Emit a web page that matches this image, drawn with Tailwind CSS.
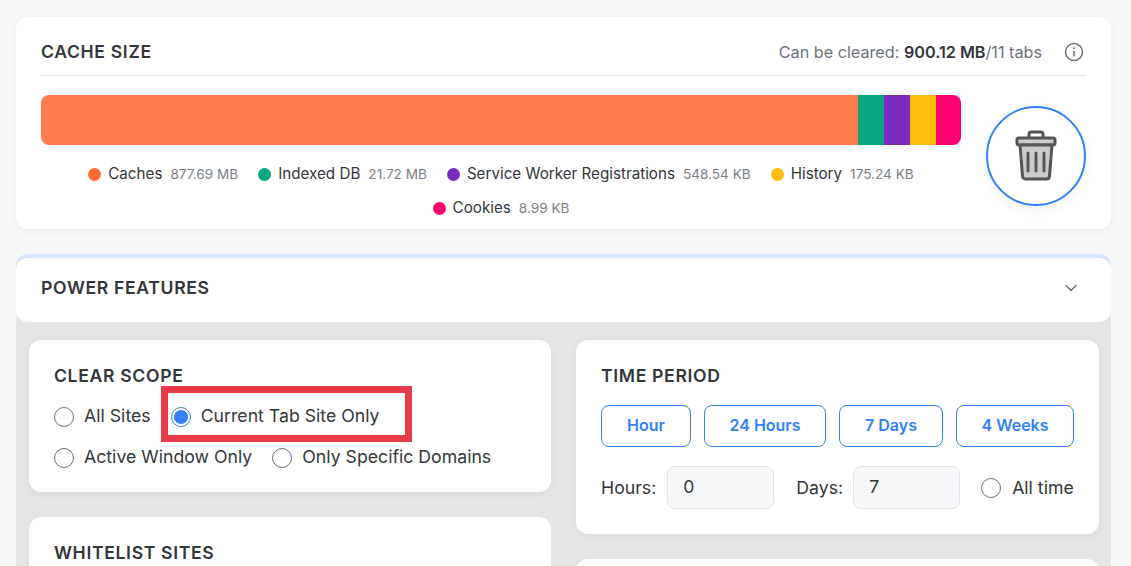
<!doctype html>
<html>
<head>
<meta charset="utf-8">
<script src="https://cdn.jsdelivr.net/npm/@tailwindcss/browser@4"></script>
</head>
<body class="m-0 h-[566px] overflow-hidden bg-[#f6f8fa] font-['Inter',sans-serif] text-[#33363b]">
<div class="flex flex-col pl-4 pr-5 pt-[17px]">
  <section class="h-[212px] rounded-xl bg-white px-[25px] shadow-[0_2px_8px_rgba(0,0,0,0.05)]">
    <div class="flex h-[59px] items-center justify-between border-b border-[#e2e3e5] pt-[12px]">
      <h2 class="text-[17.6px] font-semibold tracking-[0.66px]">CACHE SIZE</h2>
      <div class="flex items-center text-[16.2px] text-[#6c727c]">
        <span>Can be cleared: <b class="font-semibold text-[#33363b]">900.12 MB</b>/11 tabs</span>
        <svg class="ml-[22px] mr-[2px] h-5 w-5" viewBox="0 0 20 20" fill="none" stroke="#6c727c" stroke-width="1.5" stroke-linecap="round"><circle cx="10" cy="10" r="8.5"/><path d="M10 9.5v4.5"/><path d="M10 6.2v.1" stroke-width="2"/></svg>
      </div>
    </div>
    <div class="flex">
      <div class="w-[920px] pt-[19px]">
        <div class="flex h-[50px] overflow-hidden rounded-lg">
          <div class="w-[817px] bg-[#ff7c4f]"></div>
          <div class="w-[26px] bg-[#06a77d]"></div>
          <div class="w-[26px] bg-[#7b2cbf]"></div>
          <div class="w-[26px] bg-[#ffbc0a]"></div>
          <div class="w-[25px] bg-[#ff006e]"></div>
        </div>
        <div class="mt-[18px] flex flex-wrap justify-center gap-x-[20px] gap-y-[12px] text-[15.2px] leading-[22px]">
          <div class="flex items-center"><span class="mr-[7px] h-[13px] w-[13px] rounded-full bg-[#ff6b35]"></span>Caches<span class="ml-2 text-[13.6px] text-[#7a7f87]">877.69 MB</span></div>
          <div class="flex items-center"><span class="mr-[7px] h-[13px] w-[13px] rounded-full bg-[#06a77d]"></span>Indexed DB<span class="ml-2 text-[13.6px] text-[#7a7f87]">21.72 MB</span></div>
          <div class="flex items-center"><span class="mr-[7px] h-[13px] w-[13px] rounded-full bg-[#7b2cbf]"></span>Service Worker Registrations<span class="ml-2 text-[13.6px] text-[#7a7f87]">548.54 KB</span></div>
          <div class="flex items-center"><span class="mr-[7px] h-[13px] w-[13px] rounded-full bg-[#ffbc0a]"></span>History<span class="ml-2 text-[13.6px] text-[#7a7f87]">175.24 KB</span></div>
          <div class="flex items-center"><span class="mr-[7px] h-[13px] w-[13px] rounded-full bg-[#ff006e]"></span>Cookies<span class="ml-2 text-[13.6px] text-[#7a7f87]">8.99 KB</span></div>
        </div>
      </div>
      <div class="ml-[25px] mt-[30px] flex h-[100px] w-[100px] items-center justify-center rounded-full border-2 border-[#3281f6] bg-white shadow-[0_4px_12px_rgba(0,0,0,0.06)]">
        <svg class="h-[52px] w-[42px]" viewBox="0 0 42 52" fill="none" stroke="#555" stroke-width="3" stroke-linejoin="round" stroke-linecap="round">
          <path d="M14 7V4.5Q14 2 16.5 2h9Q28 2 28 4.5V7"/>
          <rect x="2" y="8" width="38" height="7" rx="2" fill="#ccc"/>
          <path d="M5 15l2.5 31q.3 3 3 3h21q2.7 0 3-3L37 15z" fill="#ccc"/>
          <path d="M13 23v18M21 23v18M29 23v18"/>
        </svg>
      </div>
    </div>
  </section>

  <section class="mt-[25px] rounded-t-xl border-t-4 border-[#d5e6ff] bg-[#e5e5e5]">
    <div class="flex h-16 items-center justify-between rounded-xl bg-white pb-[4px] pl-[25px] pr-[32px]">
      <h2 class="text-[17.6px] font-semibold tracking-[0.66px]">POWER FEATURES</h2>
      <svg class="h-4 w-4" viewBox="0 0 16 16" fill="none" stroke="#6c727c" stroke-width="1.5" stroke-linecap="round" stroke-linejoin="round"><path d="M3 5.5l5 5 5-5"/></svg>
    </div>
    <div class="grid grid-cols-[522px_523px] gap-x-[25px] px-[13px] pt-[18px]">
      <div class="flex flex-col gap-[25px]">
        <div class="h-[152px] rounded-xl bg-white px-[25px] pt-[25px] shadow-[0_2px_8px_rgba(0,0,0,0.05)]">
          <h3 class="text-[17.6px] leading-[22px] font-semibold tracking-[0.66px]">CLEAR SCOPE</h3>
          <div class="mt-[17px] flex h-[25px] items-center text-[17.7px]">
            <span class="mr-[10px] h-5 w-5 rounded-full border border-[#6f6f6f] bg-white"></span><span>All Sites</span>
            <span class="relative ml-[20px] mr-[10px] flex h-5 w-5 items-center justify-center rounded-full border border-[#3281f6] bg-white"><span class="h-[14px] w-[14px] rounded-full bg-[#3281f6]"></span><span class="absolute left-[-11px] top-[-22px] h-[56px] w-[251px] border-[7px] border-[#e83a47]"></span></span><span>Current Tab Site Only</span>
          </div>
          <div class="mt-[16px] flex h-[25px] items-center text-[17.7px]">
            <span class="mr-[10px] h-5 w-5 rounded-full border border-[#6f6f6f] bg-white"></span><span>Active Window Only</span>
            <span class="ml-[20px] mr-[10px] h-5 w-5 rounded-full border border-[#6f6f6f] bg-white"></span><span>Only Specific Domains</span>
          </div>
        </div>
        <div class="h-[120px] rounded-xl bg-white px-[25px] pt-[25px]">
          <h3 class="text-[17.6px] leading-[22px] font-semibold tracking-[0.66px]">WHITELIST SITES</h3>
        </div>
      </div>
      <div class="flex flex-col gap-[25px]">
        <div class="h-[194px] rounded-xl bg-white px-[25px] pt-[25px] shadow-[0_2px_8px_rgba(0,0,0,0.05)]">
          <h3 class="text-[17.6px] leading-[22px] font-semibold tracking-[0.66px]">TIME PERIOD</h3>
          <div class="mt-[18px] flex gap-[13px] text-[16px] font-semibold text-[#3281f6]">
            <button class="h-[42px] w-[90px] rounded-lg border border-[#3281f6] pb-[2px]">Hour</button>
            <button class="h-[42px] w-[122px] rounded-lg border border-[#3281f6] pb-[2px]">24 Hours</button>
            <button class="h-[42px] w-[104px] rounded-lg border border-[#3281f6] pb-[2px]">7 Days</button>
            <button class="h-[42px] w-[118px] rounded-lg border border-[#3281f6] pb-[2px]">4 Weeks</button>
          </div>
          <div class="mt-[19px] flex items-center text-[17.7px]">
            <span class="mr-[11px] pt-[2px]">Hours:</span>
            <input class="h-[43px] w-[107px] rounded-lg border border-[#dfe3ea] bg-[#f6f8fa] pl-[15px] pb-[3px] text-[17.6px]" value="0">
            <span class="ml-[22px] mr-[10px] pt-[2px]">Days:</span>
            <input class="h-[43px] w-[107px] rounded-lg border border-[#dfe3ea] bg-[#f6f8fa] pl-[15px] pb-[3px] text-[17.6px]" value="7">
            <span class="ml-[21px] mr-[11px] h-5 w-5 rounded-full border border-[#6f6f6f] bg-white"></span><span class="pt-[2px]">All time</span>
          </div>
        </div>
        <div class="h-[120px] rounded-xl bg-white"></div>
      </div>
    </div>
  </section>
</div>
</body>
</html>
